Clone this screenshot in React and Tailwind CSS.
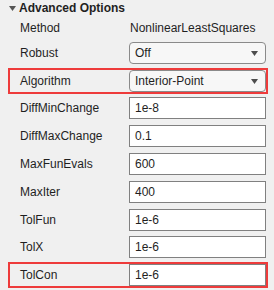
import React from "react";

const Arrow = () => (
  <svg width="7" height="5" viewBox="0 0 7 5" className="block">
    <path d="M0 0 H7 L3.5 5 Z" fill="#4d4d4d" />
  </svg>
);

function Row({ label, children, highlight, tight }) {
  return (
    <div
      className={
        "ml-[8px] w-[260px] h-[26px] flex items-center pl-[10px] border-2 " +
        (tight ? "mt-[1px] " : "mt-[2px] ") +
        (highlight ? "border-[#ee3b3b]" : "border-transparent")
      }
    >
      <div className="w-[109px] leading-[14px]">{label}</div>
      {children}
    </div>
  );
}

function Select({ value }) {
  return (
    <div className="w-[137px] h-[22px] rounded-[4px] border border-[#8a8a8a] bg-[#f7f7f7] flex items-center justify-between pl-[5px] pr-[7px]">
      <span className="leading-[14px]">{value}</span>
      <Arrow />
    </div>
  );
}

function Input({ value }) {
  return (
    <div className="w-[137px] h-[22px] border border-[#808080] bg-white flex items-center pl-[5px]">
      <span className="leading-[14px]">{value}</span>
    </div>
  );
}

export default function App() {
  return (
    <div className="w-[274px] h-[290px] bg-[#f0f0f0] overflow-hidden font-['Liberation_Sans',Arial,sans-serif] text-[12px] text-[#1f1f1f]">
      <div className="h-[16px] flex items-center pl-[9px]">
        <svg width="7" height="5" viewBox="0 0 7 5" className="block mr-[3px]">
          <path d="M0 0 H7 L3.5 5 Z" fill="#555555" />
        </svg>
        <span className="font-bold leading-[14px]">Advanced Options</span>
      </div>
      <div className="h-[22px] pt-[2px] flex items-center pl-[20px]">
        <div className="w-[109px]">Method</div>
        <div className="pl-[1px]">NonlinearLeastSquares</div>
      </div>
      <div className="flex flex-col">
        <Row label="Robust">
          <Select value="Off" />
        </Row>
        <Row label="Algorithm" highlight>
          <Select value="Interior-Point" />
        </Row>
        <Row label="DiffMinChange" tight>
          <Input value="1e-8" />
        </Row>
        <Row label="DiffMaxChange">
          <Input value="0.1" />
        </Row>
        <Row label="MaxFunEvals">
          <Input value="600" />
        </Row>
        <Row label="MaxIter">
          <Input value="400" />
        </Row>
        <Row label="TolFun">
          <Input value="1e-6" />
        </Row>
        <Row label="TolX" tight>
          <Input value="1e-6" />
        </Row>
        <Row label="TolCon" highlight>
          <Input value="1e-6" />
        </Row>
      </div>
    </div>
  );
}
